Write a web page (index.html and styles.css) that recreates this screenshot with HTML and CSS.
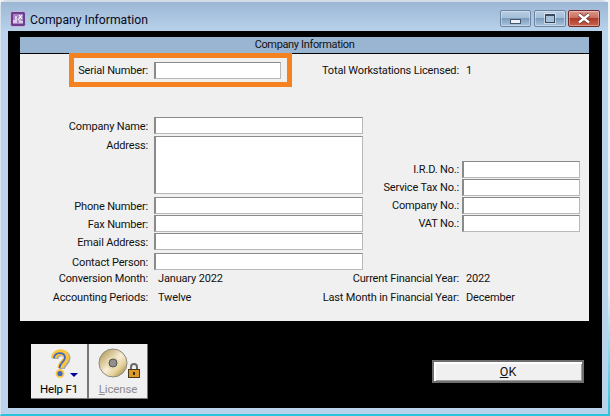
FILE: index.html
```html
<!DOCTYPE html>
<html lang="en">
<head>
<meta charset="utf-8">
<title>Company Information</title>
<link rel="stylesheet" href="styles.css">
</head>
<body>
<div class="window">
  <header class="titlebar">
    <svg class="app-icon" width="16" height="16" viewBox="0 0 16 16">
      <rect x="0.5" y="0.5" width="15" height="15" rx="2" fill="#6b3d8f" stroke="#c9b6d8"/>
      <rect x="3" y="3" width="10" height="10" fill="#a884c4"/>
      <path d="M4 12V9M6 12V5M9 4l3 4M12 4L8 9M10 12V9M12 12V10" stroke="#fff" stroke-width="1.2" fill="none"/>
    </svg>
    <span class="title-text">Company Information</span>
    <div class="caption">
      <span class="cap-btn cap-min"><i class="glyph-min"></i></span>
      <span class="cap-btn"><i class="glyph-max"></i></span>
      <span class="cap-btn cap-close">
        <svg width="16" height="11" viewBox="0 0 16 11"><path d="M3 1.500l10 8M13 1.500l-10 8" stroke="#5a2a2a" stroke-width="4" fill="none"/><path d="M3 1.500l10 8M13 1.500l-10 8" stroke="#fff" stroke-width="2.600" fill="none"/></svg>
      </span>
    </div>
  </header>
  <div class="client">
    <section class="panel">
      <h1 class="panel-head">Company Information</h1>
      <div class="top-row">
        <div class="highlight">
          <span class="label serial-label">Serial Number:</span>
          <span class="input serial-input"></span>
        </div>
        <span class="text total-label">Total Workstations Licensed:</span>
        <span class="text">1</span>
      </div>
      <div class="form">
        <div class="col-left">
          <div class="row row-first"><span class="label">Company Name:</span><span class="input"></span></div>
          <div class="row row-address"><span class="label">Address:</span><span class="input input-tall"></span></div>
          <div class="row"><span class="label">Phone Number:</span><span class="input"></span></div>
          <div class="row"><span class="label">Fax Number:</span><span class="input"></span></div>
          <div class="row"><span class="label">Email Address:</span><span class="input"></span></div>
          <div class="row row-contact"><span class="label">Contact Person:</span><span class="input"></span></div>
        </div>
        <div class="col-right">
          <div class="row-r"><span class="label-r">I.R.D. No.:</span><span class="input input-r"></span></div>
          <div class="row-r"><span class="label-r">Service Tax No.:</span><span class="input input-r"></span></div>
          <div class="row-r"><span class="label-r">Company No.:</span><span class="input input-r"></span></div>
          <div class="row-r"><span class="label-r">VAT No.:</span><span class="input input-r"></span></div>
        </div>
      </div>
      <div class="info">
        <span class="label">Conversion Month:</span><span class="val">January 2022</span>
        <span class="label-info">Current Financial Year:</span><span class="val-r">2022</span>
        <span class="label">Accounting Periods:</span><span class="val">Twelve</span>
        <span class="label-info">Last Month in Financial Year:</span><span class="val-r">December</span>
      </div>
    </section>
    <footer class="actions">
      <div class="toolbar">
        <button class="tool tool-help" type="button">
          <svg width="38" height="31" viewBox="0 0 38 31">
            <path d="M14 10C14 3 26 2 26 9.500C26 14.500 20.500 14.500 20.500 20" fill="none" stroke="#a8a8a8" stroke-width="6" transform="translate(1.500 1)"/>
            <path d="M14 10C14 3 26 2 26 9.500C26 14.500 20.500 14.500 20.500 20" fill="none" stroke="#fbc63a" stroke-width="6"/>
            <path d="M14 10C14 4 25 3 25 9.500C25 14 19.500 14.500 19.500 20" fill="none" stroke="#3f66c4" stroke-width="1.800"/>
            <circle cx="20" cy="25.500" r="3.500" fill="#3f66c4" stroke="#fbc63a" stroke-width="1.800"/>
            <path d="M30 25h8l-4 4z" fill="#00009c"/>
          </svg>
          <span>Help F1</span>
        </button>
        <button class="tool tool-license" type="button">
          <svg width="46" height="31" viewBox="0 0 46 31">
            <defs>
              <linearGradient id="disc" x1="0" y1="0" x2="1" y2="1">
                <stop offset="0" stop-color="#a88a3c"/>
                <stop offset="0.5" stop-color="#f7eed8"/>
                <stop offset="0.7" stop-color="#e6d29c"/>
                <stop offset="1" stop-color="#8e6e22"/>
              </linearGradient>
            </defs>
            <circle cx="18" cy="15" r="14" fill="url(#disc)" stroke="#8a8a80"/>
            <circle cx="18" cy="15" r="6.500" fill="#e8d9ac"/>
            <circle cx="18" cy="15" r="4" fill="#8f8f8f" stroke="#555"/>
            <path d="M36 22v-3a3 3 0 0 1 6 0v3" fill="none" stroke="#6a6a6a" stroke-width="2"/>
            <rect x="33.500" y="21.500" width="11" height="8" fill="#d99a2b" stroke="#4a3a1a"/>
            <rect x="38" y="24" width="2" height="3" fill="#3a2a10"/>
          </svg>
          <span><u>L</u>icense</span>
        </button>
      </div>
      <button class="ok" type="button"><u>O</u>K</button>
    </footer>
  </div>
</div>
</body>
</html>
```
FILE: styles.css
```css
* { box-sizing: border-box; }
html, body { margin: 0; padding: 0; }
body {
  width: 610px;
  height: 416px;
  background: linear-gradient(#eef2f6, #e6eef4 70%, #2bc4dc);
  overflow: hidden;
  font-family: Roboto, "Liberation Sans", sans-serif;
  font-size: 11px;
  letter-spacing: -0.16px;
  color: #111;
}
.window {
  width: 608px;
  height: 416px;
  display: flex;
  flex-direction: column;
  padding: 0 6px 6px 7px;
  background: #b9d3ec;
  border-top: 2px solid #d4dde6;
  border-bottom: 2px solid #2bc4dc;
  border-left: 1px solid #d8e2ec;
  border-radius: 6px 6px 0 0;
}
.titlebar {
  flex: 0 0 29px;
  margin: 0 -6px 0 -7px;
  padding: 8px 8px 0 9px;
  display: flex;
  align-items: flex-start;
  background: linear-gradient(#9cb7d4, #b8d2ec);
}
.app-icon { flex: none; margin-top: 1px; }
.title-text {
  margin: 2px 0 0 4px;
  font-size: 12.200px;
  letter-spacing: 0;
  line-height: 16px;
  color: #0a0a20;
}
.caption { margin-left: auto; display: flex; gap: 2px; }
.cap-btn {
  width: 32px;
  height: 17px;
  display: flex;
  align-items: center;
  justify-content: center;
  border: 1px solid #6d84a0;
  border-radius: 2px;
  background: linear-gradient(#b7cde3 0, #a5bfd9 45%, #7e9dbd 50%, #a8c4de 100%);
  box-shadow: inset 0 0 0 1px rgba(255,255,255,.35);
}
.cap-min { width: 31px; margin-right: 1px; }
.cap-close {
  border-color: #6d2a2a;
  background: linear-gradient(#d9968a 0, #c9705f 45%, #b03a28 50%, #c9614e 100%);
}
.glyph-min {
  width: 11px;
  height: 5px;
  margin-top: 5px;
  background: #eef2f6;
  border: 1px solid #44586e;
}
.glyph-max {
  width: 10px;
  height: 9px;
  background: #a8c0d8;
  border: 1px solid #36495e;
  border-top-width: 2px;
  box-shadow: 0 0 0 1px rgba(255,255,255,.5);
}
.client {
  flex: 1;
  background: #000;
  display: flex;
  flex-direction: column;
  padding: 6px 13px 0 12px;
}
.panel {
  height: 284px;
  background: #f0f0f0;
  display: flex;
  flex-direction: column;
}
.panel-head {
  margin: 0;
  height: 17px;
  background: #9ab5d2;
  border-bottom: 1px solid #000;
  font-size: 11px;
  letter-spacing: -0.35px;
  font-weight: 400;
  line-height: 16px;
  text-align: center;
  color: #111;
}
.top-row {
  height: 33px;
  display: flex;
  align-items: center;
}
.highlight {
  flex: none;
  width: 223px;
  height: 34px;
  margin-left: 49px;
  margin-top: -1px;
  border: 5px solid #f58220;
  display: flex;
  align-items: center;
}
.label.serial-label { width: 74px; margin-top: 0; }
.input.serial-input { width: 127px; }
.total-label { flex: none; margin-left: 30px; width: 144px; white-space: nowrap; }
.text { line-height: 14px; }
.form {
  display: flex;
  align-items: flex-start;
  margin-top: 30px;
}
.col-left { width: 343px; }
.row { display: flex; margin-bottom: 1px; }
.row-first { margin-bottom: 2px; }
.row-address { margin-bottom: 3px; }
.row-contact { margin-top: 3px; }
.label {
  flex: none;
  width: 128px;
  height: 15px;
  margin-top: 2px;
  text-align: right;
  line-height: 16px;
  white-space: nowrap;
}
.input {
  flex: none;
  display: block;
  width: 209px;
  height: 17px;
  margin-left: 6px;
  background: #fff;
  border: 1px solid #b8b8b8;
  border-top: 1px solid #8a8a8a;
  border-left: 2px solid #8a8a8a;
}
.input-tall { height: 58px; }
.col-right { margin-top: 44px; width: 217px; }
.row-r { display: flex; justify-content: flex-end; margin-bottom: 1px; }
.label-r { line-height: 17px; white-space: nowrap; }
.input.input-r { width: 118px; margin-left: 3px; }
.info {
  display: grid;
  grid-template-columns: 128px 163px 148px auto;
  row-gap: 5px;
  margin-top: 1px;
}
.val { padding-left: 10px; line-height: 14px; }
.val-r { padding-left: 7px; line-height: 14px; }
.label-info { text-align: right; line-height: 14px; white-space: nowrap; }
.info .label { height: 14px; margin-top: 0; line-height: 14px; }
.actions {
  flex: 1;
  display: flex;
  align-items: flex-start;
  justify-content: space-between;
}
.toolbar {
  display: flex;
  margin: 23px 0 0 11px;
  height: 55px;
  background: #f0f0f0;
  border-right: 1px solid #777;
  border-bottom: 1px solid #777;
}
.tool {
  padding: 4px 0 0;
  border: 0;
  background: transparent;
  font: inherit;
  font-size: 11.500px;
  letter-spacing: inherit;
  display: flex;
  flex-direction: column;
  align-items: center;
  gap: 3px;
}
.tool-help { width: 58px; border-right: 2px solid #777; color: #000; }
.tool-license { width: 58px; color: #8c8c8c; }
.ok {
  width: 152px;
  height: 23px;
  margin: 39px 5px 0 0;
  padding: 0;
  background: #f0f0f0;
  border: 2px solid #6e6e6e;
  box-shadow: inset 2px 2px 0 #fff, inset -1px -1px 0 #a0a0a0;
  font: inherit;
  font-size: 12.500px;
  color: #111;
}
```
